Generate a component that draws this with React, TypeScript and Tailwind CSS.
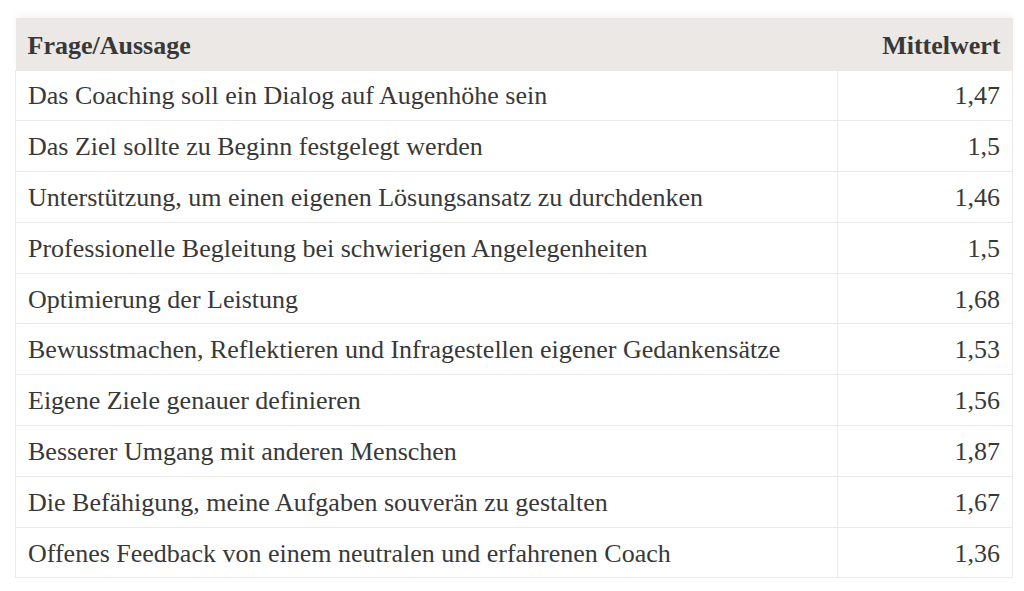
const rows: [string, string][] = [
  ["Das Coaching soll ein Dialog auf Augenhöhe sein", "1,47"],
  ["Das Ziel sollte zu Beginn festgelegt werden", "1,5"],
  ["Unterstützung, um einen eigenen Lösungsansatz zu durchdenken", "1,46"],
  ["Professionelle Begleitung bei schwierigen Angelegenheiten", "1,5"],
  ["Optimierung der Leistung", "1,68"],
  ["Bewusstmachen, Reflektieren und Infragestellen eigener Gedankensätze", "1,53"],
  ["Eigene Ziele genauer definieren", "1,56"],
  ["Besserer Umgang mit anderen Menschen", "1,87"],
  ["Die Befähigung, meine Aufgaben souverän zu gestalten", "1,67"],
  ["Offenes Feedback von einem neutralen und erfahrenen Coach", "1,36"],
];

export default function App() {
  return (
    <div
      className="w-[1024px] h-[591px] bg-white pt-[18px] px-[15px] text-[#383838]"
      style={{ fontFamily: '"Liberation Serif", "Times New Roman", serif' }}
    >
      <table className="w-[998px] border-collapse text-[26px] leading-none">
        <thead>
          <tr className="h-[52px] bg-[#ebe8e5] shadow-[0_-4px_6px_rgba(0,0,0,0.04)]">
            <th className="text-left font-bold pl-3 pt-[4px]">Frage/Aussage</th>
            <th className="text-right font-bold pr-3 pt-[4px] w-[175px]">Mittelwert</th>
          </tr>
        </thead>
        <tbody>
          {rows.map(([q, v]) => (
            <tr key={q} className="h-[50.8px]">
              <td className="border border-[#ece9e6] pl-3 pt-[2px]">{q}</td>
              <td className="border border-[#ece9e6] pr-3 pt-[2px] text-right">{v}</td>
            </tr>
          ))}
        </tbody>
      </table>
    </div>
  );
}
